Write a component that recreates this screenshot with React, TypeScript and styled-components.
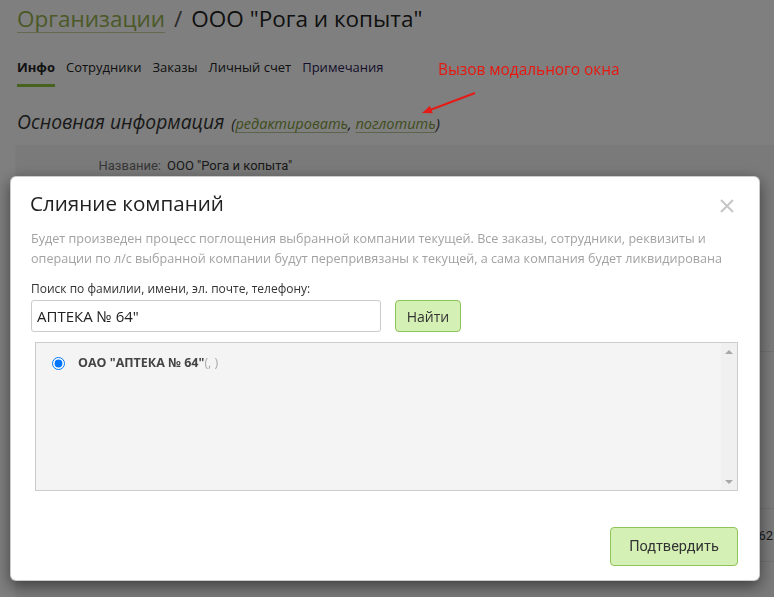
import React from "react";
import styled, { createGlobalStyle } from "styled-components";

const GlobalStyle = createGlobalStyle`
  html, body { margin: 0; padding: 0; background: #fff; }
  body { font-family: "Open Sans", "Noto Sans", sans-serif; color: #222; overflow: hidden; }
  * { box-sizing: border-box; }
`;

const Page = styled.div`
  padding: 2px 0 0 17px;
  width: 774px;
  height: 597px;
  overflow: hidden;
`;

const Heading = styled.h1`
  margin: 0;
  font-size: 22.5px;
  font-weight: 400;
  line-height: 33px;
  color: #222;
  display: flex;
  gap: 9px;
`;

const CrumbLink = styled.a`
  color: #97b24f;
  text-decoration: underline;
  text-decoration-color: #c9d6a6;
  text-underline-offset: 5px;
  text-decoration-thickness: 1px;
`;

const Sep = styled.span`
  color: #555;
`;

const Tabs = styled.nav`
  margin-top: 23px;
  display: flex;
  gap: 11px;
`;

const Tab = styled.span<{ $active?: boolean; $visited?: boolean }>`
  font-size: 13px;
  line-height: 18px;
  padding-bottom: 8px;
  font-weight: ${(p) => (p.$active ? 700 : 400)};
  color: ${(p) => (p.$visited ? "#2b1d55" : "#222")};
  border-bottom: 3px solid ${(p) => (p.$active ? "#8dc63f" : "transparent")};
`;

const Section = styled.h2`
  margin: 21px 0 0;
  font-size: 19.3px;
  font-style: italic;
  font-weight: 400;
  line-height: 28px;
  color: #333;
`;

const Paren = styled.span`
  font-size: 14.5px;
  color: #333;
  margin-left: 2px;
`;

const InlineLink = styled.a`
  color: #7f9a3a;
  text-decoration: underline;
  text-decoration-color: #b9c996;
  text-underline-offset: 3px;
`;

const Card = styled.div`
  margin: 7px -30px 0 -1px;
  background: #f5f5f5;
  box-shadow: 0 1px 3px rgba(0, 0, 0, 0.08);
`;

const CardRow = styled.div<{ $h: number }>`
  height: ${(p) => p.$h}px;
  border-bottom: 1px solid #e2e2e2;
  display: flex;
  align-items: center;
  justify-content: flex-end;
  padding-right: 31px;
  font-family: Roboto, sans-serif;
  font-size: 13px;
  color: #333;
`;

const Field = styled.div`
  display: grid;
  grid-template-columns: 145px auto;
  column-gap: 6px;
  padding-top: 12px;
  font-family: Roboto, sans-serif;
  font-size: 13px;
  line-height: 17px;
`;

const FieldLabel = styled.span`
  text-align: right;
  color: #6e6e6e;
`;

const FieldValue = styled.span`
  color: #333;
`;

const Overlay = styled.div`
  position: fixed;
  inset: 0;
  background: rgba(0, 0, 0, 0.5);
`;

const Note = styled.div`
  position: fixed;
  left: 438px;
  top: 59px;
  font-size: 15.4px;
  line-height: 22px;
  color: #e8170f;
  white-space: nowrap;
`;

const Arrow = styled.svg`
  position: fixed;
  left: 418px;
  top: 88px;
`;

const Modal = styled.div`
  position: fixed;
  left: 10px;
  top: 176px;
  width: 750px;
  background: #fff;
  border: 1px solid rgba(0, 0, 0, 0.2);
  border-radius: 6px;
  box-shadow: 0 5px 15px rgba(0, 0, 0, 0.5);
  padding: 11px 21px 14px 20px;
`;

const ModalHeader = styled.div`
  position: relative;
`;

const Title = styled.h3`
  margin: 0 0 0 -1px;
  font-size: 20.6px;
  font-weight: 400;
  line-height: 30px;
  color: #222;
`;

const Close = styled.button`
  position: absolute;
  right: 3px;
  top: 10px;
  width: 16px;
  height: 16px;
  padding: 0;
  border: 0;
  background: none;
  display: flex;
  align-items: center;
  justify-content: center;
`;

const Description = styled.p`
  margin: 11px 0 0;
  font-size: 12.6px;
  line-height: 20px;
  color: #a2a2a2;
`;

const Label = styled.label`
  display: block;
  margin-top: 11px;
  font-size: 12px;
  line-height: 17px;
  color: #333;
`;

const SearchRow = styled.div`
  display: flex;
  gap: 14px;
  margin-top: 3px;
`;

const Input = styled.input`
  width: 350px;
  height: 32px;
  border: 1px solid #ccc;
  border-radius: 3px;
  padding: 0 5px;
  font-family: "Open Sans", sans-serif;
  font-size: 15px;
  color: #222;
  outline: none;
`;

const GreenButton = styled.button<{ $w: number; $h: number; $fs: number; $font?: string }>`
  width: ${(p) => p.$w}px;
  height: ${(p) => p.$h}px;
  background: #d4f0b5;
  border: 1px solid #8fc459;
  border-radius: 4px;
  font-family: ${(p) => p.$font || '"Open Sans", sans-serif'};
  font-size: ${(p) => p.$fs}px;
  color: #333;
  padding: 0;
`;

const List = styled.div`
  margin: 10px 0 0 4px;
  height: 149px;
  border: 1px solid #ccc;
  background: #f4f4f4;
  display: flex;
`;

const ListBody = styled.div`
  flex: 1;
  padding: 12px 0 0 16px;
`;

const Item = styled.label`
  display: flex;
  align-items: center;
  gap: 13px;
  font-size: 12.5px;
  line-height: 16px;
`;

const Radio = styled.input`
  margin: 0;
  width: 13px;
  height: 13px;
  accent-color: #0075ff;
`;

const ItemName = styled.b`
  color: #444;
  font-weight: 700;
`;

const ItemMeta = styled.span`
  color: #aaa;
`;

const Scrollbar = styled.div`
  width: 16px;
  background: #f0f0f0;
  display: flex;
  flex-direction: column;
  justify-content: space-between;
  align-items: center;
  padding: 7px 0 6px;
`;

const ScrollArrow = styled.span<{ $down?: boolean }>`
  width: 0;
  height: 0;
  border-left: 4px solid transparent;
  border-right: 4px solid transparent;
  ${(p) => (p.$down ? "border-top: 4px solid #a8a8a8;" : "border-bottom: 4px solid #a8a8a8;")}
`;

const Footer = styled.div`
  margin-top: 36px;
  display: flex;
  justify-content: flex-end;
`;

export default function App() {
  return (
    <>
      <GlobalStyle />
      <Page>
        <Heading>
          <CrumbLink>Организации</CrumbLink>
          <Sep>/</Sep>
          <span>ООО "Рога и копыта"</span>
        </Heading>
        <Tabs>
          <Tab $active>Инфо</Tab>
          <Tab>Сотрудники</Tab>
          <Tab>Заказы</Tab>
          <Tab>Личный счет</Tab>
          <Tab $visited>Примечания</Tab>
        </Tabs>
        <Section>
          Основная информация{" "}
          <Paren>
            (<InlineLink>редактировать</InlineLink>, <InlineLink>поглотить</InlineLink>)
          </Paren>
        </Section>
        <Card>
          <CardRow $h={207} style={{ alignItems: "flex-start", justifyContent: "flex-start", paddingRight: 0 }}>
            <Field>
              <FieldLabel>Название:</FieldLabel>
              <FieldValue>ООО "Рога и копыта"</FieldValue>
            </Field>
          </CardRow>
          <CardRow $h={157} />
          <CardRow $h={53}>562</CardRow>
          <CardRow $h={60} />
        </Card>
      </Page>
      <Overlay />
      <Note>Вызов модального окна</Note>
      <Arrow width="62" height="30" viewBox="0 0 62 30">
        <line x1="57" y1="5" x2="10" y2="22.8" stroke="#e41b17" strokeWidth="2" />
        <polygon points="4,25 14.8,25.3 12,17.8" fill="#e41b17" />
      </Arrow>
      <Modal>
        <ModalHeader>
          <Title>Слияние компаний</Title>
          <Close aria-label="close">
            <svg width="14" height="14" viewBox="0 0 14 14">
              <path d="M1 1 L13 13 M13 1 L1 13" stroke="#c6c6c6" strokeWidth="2" />
            </svg>
          </Close>
        </ModalHeader>
        <Description>
          Будет произведен процесс поглощения выбранной компании текущей. Все заказы, сотрудники, реквизиты и
          <br />
          операции по л/с выбранной компании будут перепривязаны к текущей, а сама компания будет ликвидирована
        </Description>
        <Label>Поиск по фамилии, имени, эл. почте, телефону:</Label>
        <SearchRow>
          <Input defaultValue={'АПТЕКА № 64"'} />
          <GreenButton $w={66} $h={32} $fs={14}>Найти</GreenButton>
        </SearchRow>
        <List>
          <ListBody>
            <Item>
              <Radio type="radio" defaultChecked name="c" />
              <span>
                <ItemName>ОАО "АПТЕКА № 64"</ItemName>
                <ItemMeta>(, )</ItemMeta>
              </span>
            </Item>
          </ListBody>
          <Scrollbar>
            <ScrollArrow />
            <ScrollArrow $down />
          </Scrollbar>
        </List>
        <Footer>
          <GreenButton $w={128} $h={39} $fs={14.5} $font="Roboto, sans-serif">Подтвердить</GreenButton>
        </Footer>
      </Modal>
    </>
  );
}
